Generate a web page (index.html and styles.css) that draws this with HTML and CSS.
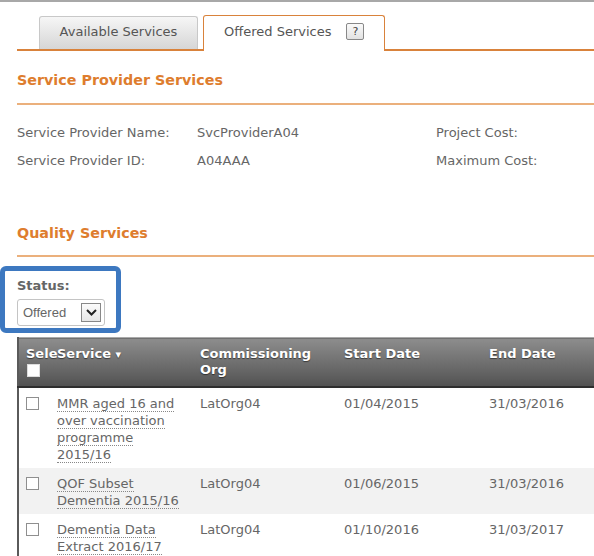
FILE: index.html
```html
<!DOCTYPE html>
<html>
<head>
<meta charset="utf-8">
<link rel="stylesheet" href="styles.css">
</head>
<body>
<div class="topbar"></div>
<div class="page">
  <div class="tabs">
    <div class="tab tab-inactive">Available Services</div>
    <div class="tab tab-active">Offered Services <span class="help">?</span></div>
  </div>

  <h2 class="section first">Service Provider Services</h2>
  <div class="info">
    <div class="lbl">Service Provider Name:</div><div class="val">SvcProviderA04</div><div class="lbl">Project Cost:</div>
    <div class="lbl">Service Provider ID:</div><div class="val">A04AAA</div><div class="lbl">Maximum Cost:</div>
  </div>

  <h2 class="section second">Quality Services</h2>

  <div class="status-box">
    <div class="status-label">Status:</div>
    <div class="select">
      <span class="select-text">Offered</span>
      <span class="select-arrow"><svg width="13" height="9" viewBox="0 0 13 9"><path d="M2 2 L6.5 6.5 L11 2" fill="none" stroke="#222" stroke-width="2"/></svg></span>
    </div>
  </div>

  <div class="table-wrap">
    <table class="grid">
      <colgroup>
        <col class="c-sel"><col class="c-svc"><col class="c-org"><col class="c-start"><col class="c-end">
      </colgroup>
      <thead>
        <tr>
          <th class="th-sel"><div class="sel-head">Select</div><span class="hbox"></span></th>
          <th>Service <span class="caret">▾</span></th>
          <th>Commissioning Org</th>
          <th>Start Date</th>
          <th>End Date</th>
        </tr>
      </thead>
      <tbody>
        <tr>
          <td><span class="cb"></span></td>
          <td><a class="lnk">MMR aged 16 and over vaccination programme 2015/16</a></td>
          <td>LatOrg04</td>
          <td>01/04/2015</td>
          <td>31/03/2016</td>
        </tr>
        <tr class="alt">
          <td><span class="cb"></span></td>
          <td><a class="lnk">QOF Subset Dementia 2015/16</a></td>
          <td>LatOrg04</td>
          <td>01/06/2015</td>
          <td>31/03/2016</td>
        </tr>
        <tr>
          <td><span class="cb"></span></td>
          <td><a class="lnk">Dementia Data Extract 2016/17</a></td>
          <td>LatOrg04</td>
          <td>01/10/2016</td>
          <td>31/03/2017</td>
        </tr>
      </tbody>
    </table>
  </div>
</div>
</body>
</html>
```

FILE: styles.css
```css
html, body {
  margin: 0;
  padding: 0;
  background: #fff;
  overflow: hidden;
}
body {
  font-family: "DejaVu Sans", Verdana, sans-serif;
  font-size: 13px;
  color: #666;
  width: 594px;
  height: 556px;
}
.topbar {
  height: 2px;
  background: #a8a8a8;
}
.page {
  padding-left: 17px;
}
.tabs {
  display: flex;
  align-items: flex-end;
  margin-top: 13px;
  padding-left: 22px;
  gap: 5px;
  border-bottom: 2px solid #d9823b;
  height: 34px;
}
.tab {
  box-sizing: border-box;
  height: 34px;
  display: flex;
  align-items: center;
  font-size: 13px;
  color: #555;
  border-radius: 3px 3px 0 0;
}
.tab-inactive {
  width: 159px;
  justify-content: center;
  background: linear-gradient(#f6f6f6, #d6d6d6);
  border: 1px solid #c8c8c8;
  border-bottom: none;
  height: 33px;
  padding-bottom: 3px;
}
.tab-active {
  width: 182px;
  padding-left: 20px;
  background: #fff;
  border: 1px solid #d9823b;
  border-bottom: none;
  height: 36px;
  margin-bottom: -2px;
  padding-bottom: 4px;
}
.help {
  display: inline-block;
  box-sizing: border-box;
  width: 18px;
  height: 17px;
  margin-left: 15px;
  border: 1px solid #888;
  border-radius: 2px;
  background: linear-gradient(#fafafa, #e2e2e2);
  font-size: 11px;
  line-height: 15px;
  text-align: center;
  color: #444;
}
.section {
  margin: 0;
  font-size: 14.3px;
  font-weight: bold;
  color: #de7d2e;
  line-height: 20px;
  border-bottom: 2px solid #ebb07c;
}
.section.first {
  padding-top: 19px;
  padding-bottom: 13px;
}
.section.second {
  padding-top: 48px;
  padding-bottom: 12px;
}
.info {
  display: grid;
  grid-template-columns: 180px 239px auto;
  margin-top: 14px;
  line-height: 28px;
  color: #666;
}
.status-box {
  box-sizing: border-box;
  margin-top: 9px;
  margin-left: -17px;
  width: 121px;
  height: 67px;
  border: 5px solid #3d78c0;
  border-radius: 6px;
  padding: 7px 0 0 12px;
}
.status-label {
  font-weight: bold;
  color: #666;
  line-height: 16px;
}
.select {
  box-sizing: border-box;
  margin-top: 5px;
  width: 88px;
  height: 27px;
  border: 1px solid #c4c4c4;
  border-radius: 3px;
  display: flex;
  align-items: center;
  justify-content: space-between;
  padding: 0 3px 0 5px;
}
.select-text {
  font-family: "Liberation Sans", Arial, sans-serif;
  font-size: 13px;
  color: #666;
}
.select-arrow {
  box-sizing: border-box;
  width: 20px;
  height: 19px;
  border: 1px solid #888;
  background: linear-gradient(#fbfbfb, #e6e6e6);
  display: flex;
  align-items: center;
  justify-content: center;
}
.table-wrap {
  margin-top: 4px;
  width: 577px;
  overflow: hidden;
}
.grid {
  border-collapse: collapse;
  table-layout: fixed;
  width: 620px;
  border-left: 2px solid #5a5a5a;
}
.c-sel { width: 31px; }
.c-svc { width: 143px; }
.c-org { width: 144px; }
.c-start { width: 145px; }
.c-end { width: 157px; }
.grid th {
  text-align: left;
  vertical-align: top;
  color: #fff;
  font-weight: bold;
  line-height: 16px;
  padding: 8px 8px 0 8px;
  height: 49px;
  box-sizing: border-box;
  background: linear-gradient(#8d8d8d, #525252);
  border-bottom: 2px solid #2e2e2e;
  border-top: 1px solid #aaa;
  text-shadow: 0 1px 1px rgba(0,0,0,0.5);
}
.grid th.th-sel {
  padding-left: 7px;
  padding-right: 0;
  overflow: visible;
}
.sel-head {
  white-space: nowrap;
  width: 32px;
  overflow: hidden;
}
.hbox {
  display: block;
  width: 11px;
  height: 11px;
  margin-top: 2px;
  margin-left: 1px;
  background: #fff;
  border: 1px solid #ddd;
}
.caret {
  font-size: 11px;
}
.grid td {
  vertical-align: top;
  padding: 7px 8px 5px 8px;
  line-height: 17px;
  color: #666;
}
.grid td:first-child {
  padding-left: 7px;
  padding-right: 0;
}
.grid tr.alt td {
  background: #f2f2f2;
}
.cb {
  display: block;
  width: 11px;
  height: 11px;
  margin-top: 2px;
  border: 1px solid #8f8f8f;
  background: #fff;
}
.lnk {
  color: #666;
  text-decoration: none;
  border-bottom: 1px dotted #888;
}
```
